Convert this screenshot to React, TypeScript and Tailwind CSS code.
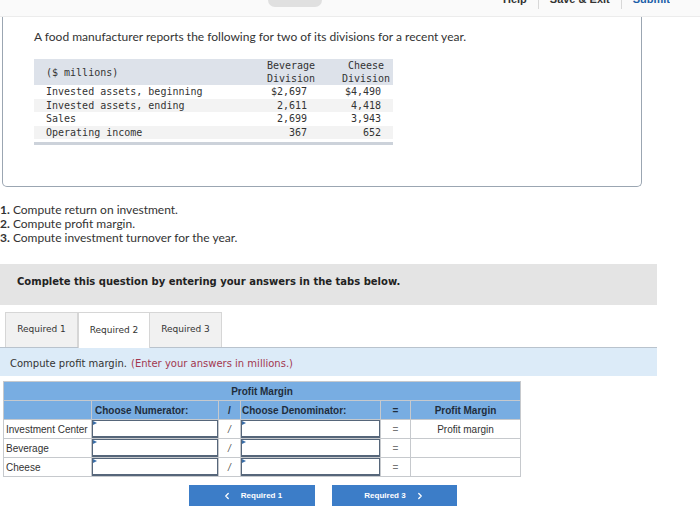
import { ChevronLeft, ChevronRight } from 'lucide-react'

const rows = [
  { label: 'Invested assets, beginning', bev: '$2,697', chz: '$4,490', shade: false },
  { label: 'Invested assets, ending', bev: '2,611', chz: '4,418', shade: true },
  { label: 'Sales', bev: '2,699', chz: '3,943', shade: false },
  { label: 'Operating income', bev: '367', chz: '652', shade: true },
]

function InputCell() {
  return (
    <div className="bg-white">
      <div className="relative h-full border border-b-2 border-[#56667a]">
        <span className="absolute left-0 top-0 h-0 w-0 border-y-[2.5px] border-y-transparent border-l-[4px] border-l-[#3a6ea8]" />
      </div>
    </div>
  )
}

export default function App() {
  const cell = 'bg-white flex items-center'
  return (
    <div className="w-[700px] h-[513px] overflow-hidden bg-white text-[#333] font-['Lato',sans-serif]">
      {/* top bar */}
      <div className="h-[17px] bg-[#fafafa] border-b border-[#ececec] flex items-start">
        <div className="ml-[268px] w-[54px] h-[7px] rounded-b-[8px] bg-[#e0e0e0]" />
        <div className="ml-auto mr-[30px] flex items-start h-[9px] overflow-hidden font-['Liberation_Sans',sans-serif] text-[11px] font-bold">
          <span className="-mt-[8px] leading-[14px] text-[#333]">Help</span>
          <span className="mx-[11px] w-px h-[9px] bg-[#d8d8d8]" />
          <span className="-mt-[8px] leading-[14px] text-[#333]">Save &amp; Exit</span>
          <span className="mx-[11px] w-px h-[9px] bg-[#d8d8d8]" />
          <span className="-mt-[8px] leading-[14px] text-[#1d5fa8]">Submit</span>
        </div>
      </div>

      {/* question card */}
      <div className="ml-[2px] w-[640px] h-[170px] border-x border-b border-[#9ba6b2] rounded-b-[5px] pt-[12px] pl-[31px]">
        <p className="text-[12px] leading-[15px]">
          A food manufacturer reports the following for two of its divisions for a recent year.
        </p>
        <div className="mt-[15px] w-[359px] font-['DejaVu_Sans_Mono',monospace] text-[10px] text-[#333]">
          <div className="grid grid-cols-[229px_56px_74px] bg-[#dde2ea] h-[26px] items-center leading-[13px]">
            <div className="pl-[12px]">($ millions)</div>
            <div className="text-center">Beverage<br />Division</div>
            <div className="pl-[20px] text-center">Cheese<br />Division</div>
          </div>
          {rows.map((r) => (
            <div
              key={r.label}
              className={`grid grid-cols-[229px_56px_74px] h-[13.5px] leading-[13.5px] ${r.shade ? 'bg-[#f3f3f3]' : 'bg-white'}`}
            >
              <div className="pl-[12px]">{r.label}</div>
              <div className="text-right pr-[12px]">{r.bev}</div>
              <div className="text-right pr-[12px]">{r.chz}</div>
            </div>
          ))}
          <div className="mt-[3px] h-[3px] bg-[#ccd2da]" />
        </div>
      </div>

      {/* requirements */}
      <div className="mt-[16px] text-[12px] leading-[14px]">
        <p><b>1.</b> Compute return on investment.</p>
        <p><b>2.</b> Compute profit margin.</p>
        <p><b>3.</b> Compute investment turnover for the year.</p>
      </div>

      <div className="mt-[19px] w-[657px] h-[41px] bg-[#e4e4e4] pt-[11px] pl-[17px] font-['DejaVu_Sans',sans-serif] text-[10px] leading-[14px] font-bold text-[#222]">
        Complete this question by entering your answers in the tabs below.
      </div>

      {/* tabs */}
      <div className="mt-[7px] pl-[5px] flex font-['DejaVu_Sans',sans-serif] text-[9px] text-[#333]">
        <div className="w-[73px] h-[35px] flex items-center justify-center bg-[#f1f1f1] border border-b-0 border-[#d6d6d6]">Required 1</div>
        <div className="w-[72px] h-[36px] -mb-px flex items-center justify-center bg-white border border-b-0 border-[#d6d6d6] relative z-10">Required 2</div>
        <div className="w-[72px] h-[35px] flex items-center justify-center bg-[#f1f1f1] border border-b-0 border-l-0 border-[#d6d6d6]">Required 3</div>
      </div>
      <div className="w-[657px] h-[29px] border-t border-[#b9c3cd] bg-[#dcebf8] flex items-center pl-[10px] pt-[2px] font-['DejaVu_Sans',sans-serif] text-[10px]">
        <span className="text-[#333]">Compute profit margin.</span>
        <span className="ml-[4px] text-[#a2374f]">(Enter your answers in millions.)</span>
      </div>

      {/* answer table */}
      <div className="mt-[5px] ml-[3px] w-[518px] bg-[#c6c9cd] p-px grid grid-cols-[87px_126px_21px_139px_29px_109px] gap-px auto-rows-[18px] font-['Liberation_Sans',sans-serif] text-[10px] text-[#333]">
        <div className="col-span-6 bg-[#78ade2] flex items-center justify-center font-bold text-[#1f2d3d]">Profit Margin</div>
        <div className="bg-[#78ade2]" />
        <div className="bg-[#78ade2] flex items-center pl-[3px] font-bold text-[#1f2d3d]">Choose Numerator:</div>
        <div className="bg-[#78ade2] flex items-center justify-center font-bold text-[#1f2d3d]">/</div>
        <div className="bg-[#78ade2] flex items-center pl-[1px] font-bold text-[#1f2d3d]">Choose Denominator:</div>
        <div className="bg-[#78ade2] flex items-center justify-center font-bold text-[#1f2d3d]">=</div>
        <div className="bg-[#78ade2] flex items-center justify-center font-bold text-[#1f2d3d]">Profit Margin</div>

        {['Investment Center', 'Beverage', 'Cheese'].map((name, i) => (
          <div key={name} className="contents">
            <div className={`${cell} pl-[2px]`}>{name}</div>
            <InputCell />
            <div className={`${cell} justify-center italic text-[#555]`}>/</div>
            <InputCell />
            <div className={`${cell} justify-center text-[#777]`}>=</div>
            <div className={`${cell} justify-center`}>{i === 0 ? 'Profit margin' : ''}</div>
          </div>
        ))}
      </div>

      {/* nav buttons */}
      <div className="mt-[8px] ml-[189px] flex gap-[17px] font-['Liberation_Sans',sans-serif] text-[8px] font-bold text-white">
        <div className="w-[126px] h-[21px] bg-[#3c7dc8] flex items-center justify-center gap-[9px]">
          <ChevronLeft size={10} strokeWidth={3} />
          <span>Required 1</span>
        </div>
        <div className="w-[125px] h-[21px] bg-[#3c7dc8] flex items-center justify-center gap-[9px]">
          <span>Required 3</span>
          <ChevronRight size={10} strokeWidth={3} />
        </div>
      </div>
    </div>
  )
}
